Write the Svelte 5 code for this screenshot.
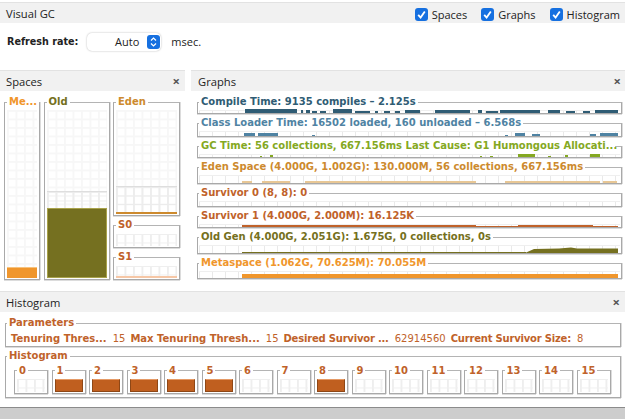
<script>
  const graphs = [
    { t: 'Compile Time: 9135 compiles – 2.125s', c: '#2f5c74', bars: [[245,52,4],[301,2,3],[306,4,3],[312,5,2],[320,6,2],[333,19,4],[355,15,2],[375,3,2],[384,6,2],[395,5,2],[405,15,3],[435,35,3],[478,4,3],[486,12,2],[500,40,3],[548,12,3],[566,9,2],[583,7,2],[595,23,3]] },
    { t: 'Class Loader Time: 16502 loaded, 160 unloaded – 6.568s', c: '#4f83a3', bars: [[244,11,3],[258,20,3],[312,3,1],[505,3,1],[515,10,3],[532,8,2],[590,6,2],[600,18,3]] },
    { t: 'GC Time: 56 collections, 667.156ms Last Cause: G1 Humongous Allocati...', c: '#84a822', end: true, bars: [[260,2,1],[270,3,2],[480,2,1],[490,3,1],[518,17,3],[548,3,1],[565,3,2],[590,10,3]] },
    { t: 'Eden Space (4.000G, 1.002G): 130.000M, 56 collections, 667.156ms', c: '#cd8a2e', bars: [[242,10,2],[262,28,2],[305,171,2],[505,95,2],[603,14,2]], light: '#e8c795' },
    { t: 'Survivor 0 (8, 8): 0', c: '#c0622a', bars: [] },
    { t: 'Survivor 1 (4.000G, 2.000M): 16.125K', c: '#c0622a', bars: [[242,234,2],[476,42,1],[518,75,2],[593,25,1]] },
    { t: 'Old Gen (4.000G, 2.051G): 1.675G, 0 collections, 0s', c: '#757020', bars: [[242,284,1]], area: '326,16 335,12 360,11.5 372,10.5 378,11.5 419,11.5 419,16' },
    { t: 'Metaspace (1.062G, 70.625M): 70.055M', c: '#f0962c', bars: [[242,376,4]] }
  ];
  const survivors = Array.from({ length: 16 }, (_, i) => ({ n: i, on: i >= 1 && i <= 5 || i === 8 }));
  const params = [
    ['Tenuring Thres...', '15'],
    ['Max Tenuring Thresh...', '15'],
    ['Desired Survivor ...', '62914560'],
    ['Current Survivor Size:', '8']
  ];
  const toggles = ['Spaces', 'Graphs', 'Histogram'];
</script>

<div class="page">
  <header class="bar main-bar">
    <span>Visual GC</span>
    <div class="toggles">
      {#each toggles as t}
        <span class="toggle">
          <svg class="check" viewBox="0 0 13 13" width="13" height="13">
            <rect width="13" height="13" rx="3" fill="#1670e0" />
            <path d="M3.2 6.8 5.6 9.6 9.8 3.4" fill="none" stroke="#fff" stroke-width="1.8" />
          </svg>
          {t}
        </span>
      {/each}
    </div>
  </header>

  <div class="refresh">
    <b>Refresh rate:</b>
    <div class="spinner">
      <span>Auto</span>
      <svg viewBox="0 0 13 14" width="13" height="14">
        <rect width="13" height="14" rx="3" fill="#1670e0" />
        <path d="M4 5.5 6.5 3 9 5.5M4 8.5 6.5 11 9 8.5" fill="none" stroke="#fff" stroke-width="1.2" />
      </svg>
    </div>
    <span>msec.</span>
  </div>

  <div class="middle">
    <section class="spaces">
      <header class="bar"><span>Spaces</span><span class="close">×</span></header>
      <div class="space-grid">
        <div class="box me">
          <b class="legend">Me...</b>
          <div class="plot"><div class="fill fill-me"></div></div>
        </div>
        <div class="box old">
          <b class="legend">Old</b>
          <div class="plot"><div class="committed c-old"></div><div class="fill fill-old"></div></div>
        </div>
        <div class="eden-col">
          <div class="box eden">
            <b class="legend">Eden</b>
            <div class="plot"><div class="committed c-eden"></div><div class="fill fill-eden"></div></div>
          </div>
          <div class="box s0">
            <b class="legend">S0</b>
            <div class="plot dim"></div>
          </div>
          <div class="box s1">
            <b class="legend">S1</b>
            <div class="plot dim"><div class="fill fill-s1"></div></div>
          </div>
        </div>
      </div>
    </section>

    <section class="graphs">
      <header class="bar"><span>Graphs</span><span class="close">×</span></header>
      <div class="graph-list">
        {#each graphs as g}
          <div class="box graph">
            <b class="legend" class:legend-end={g.end} style="color:{g.c}">{g.t}</b>
            <div class="band"></div>
            <svg class="spark" viewBox="0 0 420 16" preserveAspectRatio="xMinYMax slice">
              {#each g.bars as [x, w, h]}
                <rect x={x - 199} y={16 - h} width={w} height={h} fill={g.light ?? g.c} />
              {/each}
              {#if g.area}<polygon points={g.area} fill={g.c} />{/if}
            </svg>
          </div>
        {/each}
      </div>
    </section>
  </div>

  <section class="histogram">
    <header class="bar"><span>Histogram</span><span class="close">×</span></header>
    <div class="hist-body">
      <div class="box params">
        <b class="legend">Parameters</b>
        {#each params as [k, v], i}
          <b class:tight={i >= 2}>{k}</b><span class="val">{v}</span>
        {/each}
      </div>
      <div class="box hist">
        <b class="legend">Histogram</b>
        <div class="cells">
          {#each survivors as s}
            <div class="box cell">
              <b class="legend">{s.n}</b>
              <div class="plot dim" class:on={s.on}></div>
            </div>
          {/each}
        </div>
      </div>
    </div>
  </section>

  <div class="foot"></div>
</div>

<style>
  :global(body) { margin: 0; background: #fff; }
  .page {
    width: 625px; height: 419px; overflow: hidden; background: #fff;
    display: flex; flex-direction: column;
    font: 11px "Open Sans", "Noto Sans", sans-serif; color: #222;
    padding-top: 2px; box-sizing: border-box;
  }
  .bar {
    height: 20px; flex: none; display: flex; align-items: center; justify-content: space-between;
    background: #f1f1f1; border-top: 1px solid #e2e2e2; padding: 0 5px 0 6px; font-size: 11.2px;
  }
  .toggles { display: flex; gap: 14px; margin-top: 2px; }
  .toggle { display: flex; align-items: center; gap: 4px; font-size: 11px; }
  .check { flex: none; }
  .refresh { height: 47px; flex: none; display: flex; align-items: center; padding: 0 7px 10px; gap: 9px; box-sizing: border-box; }
  .refresh b { font: 700 9.6px "DejaVu Sans", sans-serif; }
  .spinner {
    width: 74px; height: 18px; box-sizing: border-box; margin-right: 1px;
    display: flex; align-items: center; justify-content: flex-end; gap: 8px; padding-right: 1px;
    background: #fff; border-radius: 5px; box-shadow: 0 0 2px rgba(0,0,0,.3);
  }
  .middle { flex: none; height: 221px; display: grid; grid-template-columns: 185px 434px; column-gap: 6px; }
  .middle section { display: flex; flex-direction: column; }
  .close { color: #555; font-size: 13px; font-weight: 700; line-height: 1; }
  .box {
    position: relative; box-sizing: border-box; border: 1px solid #a9a9a9; border-top-color: #b4b4b4;
    background: #fff; min-height: 0; box-shadow: 0 1px 0 #dcdcdc, 1px 0 0 #dcdcdc;
  }
  .legend {
    position: absolute; left: 1px; top: -8px; background: #fff; padding: 0 2px;
    white-space: nowrap; font: 700 10px/14px "DejaVu Sans", sans-serif;
  }
  .space-grid {
    padding: 11px 0 0 4px; display: grid; grid-template-columns: 36px 66px 67px; column-gap: 3.5px;
    grid-template-rows: 178px;
  }
  .space-grid .legend { left: 2px; }
  .me .legend { color: #f0962c; }
  .old .legend { color: #757020; }
  .eden .legend { color: #cd8a2e; }
  .s0 .legend, .s1 .legend { color: #c0622a; }
  .eden-col { display: grid; grid-template-rows: 114px 23px 23px; row-gap: 9px; }
  .plot {
    position: absolute; left: 2px; right: 2px; top: 7px; bottom: 1px; overflow: hidden;
    background-color: #fff;
    background-image: linear-gradient(#f7f7f7 2px, transparent 2px), linear-gradient(90deg, #f7f7f7 2px, transparent 2px);
    background-size: 8.5px 8.5px;
  }
  .plot.dim {
    top: 8px; bottom: 1px;
    background-image: linear-gradient(#efefef 1px, transparent 1px), linear-gradient(90deg, #eeeeee 2px, transparent 2px);
    background-size: 8.5px 8.5px;
  }
  .committed { position: absolute; left: 0; right: 0; bottom: 0; border-top: 1px solid #dedede;
    background-image: linear-gradient(#ececec 1px, transparent 1px), linear-gradient(90deg, #ededed 2px, transparent 2px);
    background-size: 8.5px 8.5px; }
  .c-old { height: 86px; }
  .c-eden { height: 27px; }
  .fill { position: absolute; left: 0; right: 0; bottom: 0; box-sizing: border-box; }
  .fill-me { height: 11px; background: #f0962c; border-top: 1px solid #f7c27c; }
  .fill-old { height: 70px; background: #757020; border: 1px solid #a8a24a; }
  .fill-eden { height: 2px; background: #cd8a2e; }
  .fill-s1 { height: 2px; background: #f6c7a6; }
  .graphs .bar { padding-left: 7px; padding-right: 4px; }
  .graph-list {
    padding: 11px 0 0 6px; display: grid; row-gap: 9px;
    grid-template-columns: 425px; grid-template-rows: 12px 14px 12px 17px 14px 12px 17px 16px;
  }
  .band {
    position: absolute; left: 1px; right: 1px; top: 7px; bottom: 0; border-top: 1px solid #efefef;
    background-image: linear-gradient(90deg, #e9e9e9 1px, transparent 1px);
    background-size: 13px 100%;
  }
  .legend-end { right: 6px; }
  .spark { position: absolute; left: 1px; bottom: 0; width: 420px; height: 16px; }
  .histogram { flex: none; height: 116px; display: flex; flex-direction: column; }
  .hist-body { padding: 11px 4px 0 5px; display: grid; grid-template-rows: 24px 42px; row-gap: 9px; }
  .params {
    display: flex; align-items: center; padding: 6px 0 0 5px; color: #c0622a; gap: 6px;
    font: 10px "DejaVu Sans", sans-serif;
  }
  .tight { letter-spacing: -.2px; }
  .params .legend, .hist .legend, .cell .legend { color: #c0622a; }
  .val { font-weight: 400; margin-right: -1px; }
  .cells {
    position: absolute; left: 8px; top: 13px; display: grid;
    grid-template-columns: repeat(16, 34px); column-gap: 3.5px;
  }
  .cell { height: 24px; }
  .cell .legend { left: 2px; top: -7px; }
  .plot.on { background: #c05f1f; border: 1px solid #8e4716; border-top-color: #e59a66; box-sizing: border-box; }
  .foot { flex: 1; background: #cdcdcd; border-top: 1px solid #8b8b8b; }
</style>
